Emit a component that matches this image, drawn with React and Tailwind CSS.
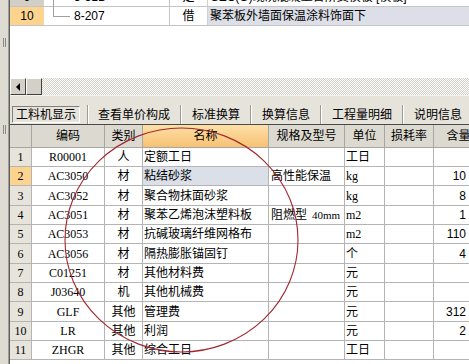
import React from 'react';

const CJK = "font-['Liberation_Sans','Noto_Sans_CJK_SC',sans-serif]";
const SERIF = "font-['Liberation_Serif','Noto_Sans_CJK_SC',serif]";

// 工料机明细
const items = [
  { n: 1, code: 'R00001', cat: '人', name: '定额工日', spec: '', unit: '工日', qty: '' },
  { n: 2, code: 'AC3050', cat: '材', name: '粘结砂浆', spec: '高性能保温', unit: 'kg', qty: '10', sel: true },
  { n: 3, code: 'AC3052', cat: '材', name: '聚合物抹面砂浆', spec: '', unit: 'kg', qty: '8', tall: true },
  { n: 4, code: 'AC3051', cat: '材', name: '聚苯乙烯泡沫塑料板', spec: '阻燃型', mm: '40mm', unit: 'm2', qty: '1' },
  { n: 5, code: 'AC3053', cat: '材', name: '抗碱玻璃纤维网格布', spec: '', unit: 'm2', qty: '110' },
  { n: 6, code: 'AC3056', cat: '材', name: '隔热膨胀锚固钉', spec: '', unit: '个', qty: '4', tall: true },
  { n: 7, code: 'C01251', cat: '材', name: '其他材料费', spec: '', unit: '元', qty: '' },
  { n: 8, code: 'J03640', cat: '机', name: '其他机械费', spec: '', unit: '元', qty: '' },
  { n: 9, code: 'GLF', cat: '其他', name: '管理费', spec: '', unit: '元', qty: '312', tall: true },
  { n: 10, code: 'LR', cat: '其他', name: '利润', spec: '', unit: '元', qty: '2' },
  { n: 11, code: 'ZHGR', cat: '其他', name: '综合工日', spec: '', unit: '工日', qty: '' },
];

const tabs = ['查看单价构成', '标准换算', '换算信息', '工程量明细', '说明信息'];

function Cell({ tall, className = '', children }) {
  return (
    <div className={`${tall ? 'h-[20px]' : 'h-[19px]'} border-r border-b border-[#b4b4b4] flex items-center overflow-hidden whitespace-nowrap text-[12px] text-black ${className}`}>
      {children}
    </div>
  );
}

function Head({ className = '', children }) {
  return (
    <div className={`h-[23px] border-r border-b border-[#a8a6a0] flex items-center justify-center whitespace-nowrap text-[12px] text-black ${CJK} ${className}`}>
      {children}
    </div>
  );
}

function UpperRow({ num, code, cat, name, numBg, nameBg, branch }) {
  return (
    <div className="flex h-[19px] border-b border-[#c4c4c4]">
      <div className={`w-[34px] shrink-0 flex items-center justify-center text-[12px] ${CJK} ${numBg}`}>{num}</div>
      <div className={`w-[126px] shrink-0 flex items-start border-r border-[#c4c4c4] text-[12px] ${CJK}`}>
        {branch ? (
          <div className="ml-[9px] w-[17px] h-[10px] border-l border-b border-[#a0a0a0]" />
        ) : (
          <div className="ml-[9px] w-[17px] h-[19px] border-l border-[#a0a0a0]" />
        )}
        <span className="ml-[4px] leading-[19px]">{code}</span>
      </div>
      <div className={`w-[38px] shrink-0 flex items-center justify-center border-r border-[#d0d0d0] text-[12px] ${CJK}`}>{cat}</div>
      <div className={`flex-1 flex items-center pl-[2px] whitespace-nowrap text-[12px] ${CJK} ${nameBg}`}>{name}</div>
    </div>
  );
}

export default function App() {
  return (
    <div className="w-[469px] h-[364px] relative overflow-hidden flex bg-white">
      {/* 左侧框架 */}
      <div className="w-[8px] shrink-0 bg-[#dedbd3] flex flex-col items-center">
        <div className="mt-[38px] w-[3px] h-[9px] border-x border-[#8a8a8a]" />
        <div className="mt-[78px] w-[3px] h-[9px] border-x border-[#8a8a8a]" />
      </div>
      <div className="w-[1px] shrink-0 bg-[#a09e98]" />
      <div className="w-[1px] shrink-0 bg-[#5e5e5e]" />

      <div className="w-[459px] shrink-0 flex flex-col">
        {/* 上部定额列表 */}
        <div className="h-[78px] overflow-hidden bg-white">
          <div className="-mt-[12px]">
            <UpperRow num="9" code="3-31B" cat="定" name="GZC(G)现浇混凝土台阶支模板 [模板]" numBg="bg-[#d2cfc7]" nameBg="" />
            <UpperRow num="10" code="8-207" cat="借" name="聚苯板外墙面保温涂料饰面下" numBg="bg-[#fcd490]" nameBg="bg-[#dcdfe7]" branch />
          </div>
        </div>

        {/* 横向滚动条 */}
        <div className="h-[17px] flex">
          <div className="w-[16px] h-[17px] bg-[#d4d0c8] border border-t-white border-l-white border-r-[#404040] border-b-[#404040] flex items-center justify-center">
            <div className="w-0 h-0 border-y-[4px] border-y-transparent border-r-[4px] border-r-black" />
          </div>
          <div className="w-[16px] h-[17px] bg-[#d4d0c8] border border-t-white border-l-white border-r-[#404040] border-b-[#404040]" />
          <div className="flex-1 bg-[image:repeating-conic-gradient(#d4d0c8_0%_25%,#ffffff_0%_50%)] bg-[length:2px_2px]" />
        </div>

        {/* 页签 */}
        <div className={`h-[29px] bg-[#e6e3db] border-t border-[#f4f3ef] flex items-start pt-[10px] text-[12px] text-black ${CJK}`}>
          <div className="ml-[2px] w-[68px] h-[17px] border border-t-[#808080] border-l-[#808080] border-r-white border-b-white flex items-center justify-center leading-none">
            工料机显示
          </div>
          {tabs.map((t, i) => (
            <React.Fragment key={t}>
              <div className={`${i === 0 ? 'ml-[7px] mr-[9px]' : 'mx-[10px]'} -mt-[1px] w-[2px] h-[19px] border-l border-[#9c9a94] border-r border-r-white`} />
              <div className="h-[17px] flex items-center leading-none">{t}</div>
            </React.Fragment>
          ))}
        </div>

        {/* 工料机表格 */}
        <div className="flex-1 overflow-hidden border-t border-[#4a4a4a]">
          <div className="grid w-max grid-cols-[22px_73px_38px_126px_76px_40px_49px_50px]">
            <Head className="bg-[#dcd9d0]" />
            <Head className="bg-[#dcd9d0]">编码</Head>
            <Head className="bg-[#dcd9d0]">类别</Head>
            <Head className="bg-gradient-to-b from-[#fde0a6] to-[#f7c173]">名称</Head>
            <Head className="bg-[#dcd9d0]">规格及型号</Head>
            <Head className="bg-[#dcd9d0]">单位</Head>
            <Head className="bg-[#dcd9d0]">损耗率</Head>
            <Head className="bg-[#dcd9d0]">含量</Head>

            {items.map((r) => (
              <React.Fragment key={r.n}>
                <Cell tall={r.tall} className={`justify-center ${SERIF} ${r.sel ? 'bg-[#fcd490]' : 'bg-[#e7e4dc]'}`}>{r.n}</Cell>
                <Cell tall={r.tall} className={`justify-center text-[11px] ${SERIF}`}>{r.code}</Cell>
                <Cell tall={r.tall} className={`justify-center ${CJK}`}>{r.cat}</Cell>
                <Cell tall={r.tall} className={`pl-[1px] ${CJK} ${r.sel ? 'bg-[#dadfe8]' : ''}`}>{r.name}</Cell>
                <Cell tall={r.tall} className={`pl-[2px] ${CJK}`}>
                  {r.spec}
                  {r.mm && <span className={`ml-[5px] text-[11px] ${SERIF}`}>{r.mm}</span>}
                </Cell>
                <Cell tall={r.tall} className={`pl-[1px] ${SERIF}`}>{r.unit}</Cell>
                <Cell tall={r.tall} />
                <Cell tall={r.tall} className={`justify-end pr-[17px] ${CJK}`}>{r.qty}</Cell>
              </React.Fragment>
            ))}
          </div>
        </div>
      </div>

      {/* 红色圈注 */}
      <svg className="absolute inset-0 pointer-events-none" width="469" height="364" viewBox="0 0 469 364">
        <ellipse cx="181.5" cy="240" rx="116.5" ry="112" fill="none" stroke="#a3262f" strokeWidth="1.1" />
      </svg>
    </div>
  );
}
